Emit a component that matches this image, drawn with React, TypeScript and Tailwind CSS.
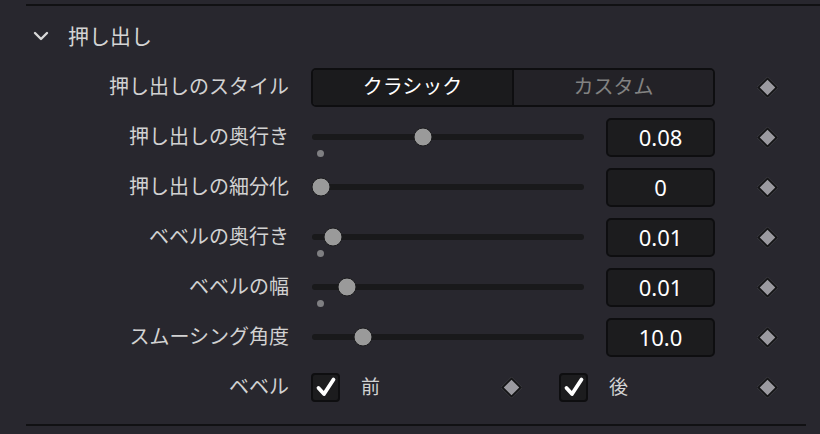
const FONT = "font-['Noto_Sans','Noto_Sans_CJK_JP',sans-serif]";

function Diamond() {
  return (
    <div className="w-[104px] flex justify-center">
      <div className="w-[15px] h-[15px] rotate-45 bg-[#9b9aa0] border-2 border-[#141416]" />
    </div>
  );
}

function Label({ text }: { text: string }) {
  return (
    <div className="w-[289px] text-right text-[20px] text-[#d2d2d2] leading-none">{text}</div>
  );
}

function SliderRow({ label, value, pos, dot }: { label: string; value: string; pos: number; dot?: boolean }) {
  return (
    <div className="h-[50px] flex items-center">
      <Label text={label} />
      <div className="ml-[22px] w-[404px] flex items-center">
        <div className="relative w-[272px] h-[6px] ml-[1px] rounded-full bg-[#19191b]">
          <div
            className="absolute top-1/2 w-[19px] h-[19px] -translate-x-1/2 -translate-y-1/2 rounded-full bg-[#9a9a9a] border border-[#1c1c1e]"
            style={{ left: pos }}
          />
          {dot && (
            <div className="absolute left-[5px] top-[16px] w-[7px] h-[7px] rounded-full bg-[#7f7f82]" />
          )}
        </div>
        <div className="ml-auto w-[109px] h-[39px] rounded-[5px] bg-[#1c1c1e] border-2 border-[#0e0e10] flex items-center justify-center text-[22px] text-white">
          {value}
        </div>
      </div>
      <Diamond />
    </div>
  );
}

function Check() {
  return (
    <div className="w-[29px] h-[29px] rounded-[4px] bg-[#1c1c1e] border-2 border-[#0e0e10] flex items-center justify-center">
      <svg width="22" height="22" viewBox="0 0 22 22">
        <path d="M3.5 12 L9 18 L18.5 3.5" fill="none" stroke="#fff" strokeWidth="3.8" strokeLinecap="round" strokeLinejoin="round" />
      </svg>
    </div>
  );
}

export default function App() {
  return (
    <div className={`w-[820px] h-[434px] bg-[#28272e] pt-[4px] ${FONT}`}>
      <div className="ml-[26px] h-[2px] bg-[#111113]" />
      <div className="h-[56px] pt-1 flex items-center pl-[33px]">
        <svg width="16" height="12" viewBox="0 0 16 12">
          <path d="M2 3 L8 9 L14 3" fill="none" stroke="#d8d8d8" strokeWidth="2.4" strokeLinecap="round" strokeLinejoin="round" />
        </svg>
        <span className="ml-[19px] text-[21px] text-[#d4d4d4] leading-none">押し出し</span>
      </div>

      <div className="h-[50px] flex items-center">
        <Label text="押し出しのスタイル" />
        <div className="ml-[22px] w-[404px] h-[39px] flex rounded-[5px] border-2 border-[#0e0e10] overflow-hidden">
          <div className="w-[201px] bg-[#1b1b1d] border-r-2 border-[#0e0e10] flex items-center justify-center text-[20px] text-white">
            クラシック
          </div>
          <div className="flex-1 bg-[#232227] flex items-center justify-center text-[20px] text-[#828282]">
            カスタム
          </div>
        </div>
        <Diamond />
      </div>

      <SliderRow label="押し出しの奥行き" value="0.08" pos={111} dot />
      <SliderRow label="押し出しの細分化" value="0" pos={9} />
      <SliderRow label="ベベルの奥行き" value="0.01" pos={21} dot />
      <SliderRow label="ベベルの幅" value="0.01" pos={35} dot />
      <SliderRow label="スムーシング角度" value="10.0" pos={51} />

      <div className="h-[50px] flex items-center">
        <Label text="ベベル" />
        <div className="ml-[22px] w-[404px] flex items-center">
          <Check />
          <span className="ml-[21px] text-[19px] text-[#d2d2d2]">前</span>
          <div className="ml-[124px] w-[15px] h-[15px] rotate-45 bg-[#9b9aa0] border-2 border-[#141416]" />
          <div className="ml-[40px]"><Check /></div>
          <span className="ml-[21px] text-[19px] text-[#d2d2d2]">後</span>
        </div>
        <Diamond />
      </div>

      <div className="mt-[12px] ml-[26px] w-[780px] h-[2px] bg-[#111113]" />
    </div>
  );
}
